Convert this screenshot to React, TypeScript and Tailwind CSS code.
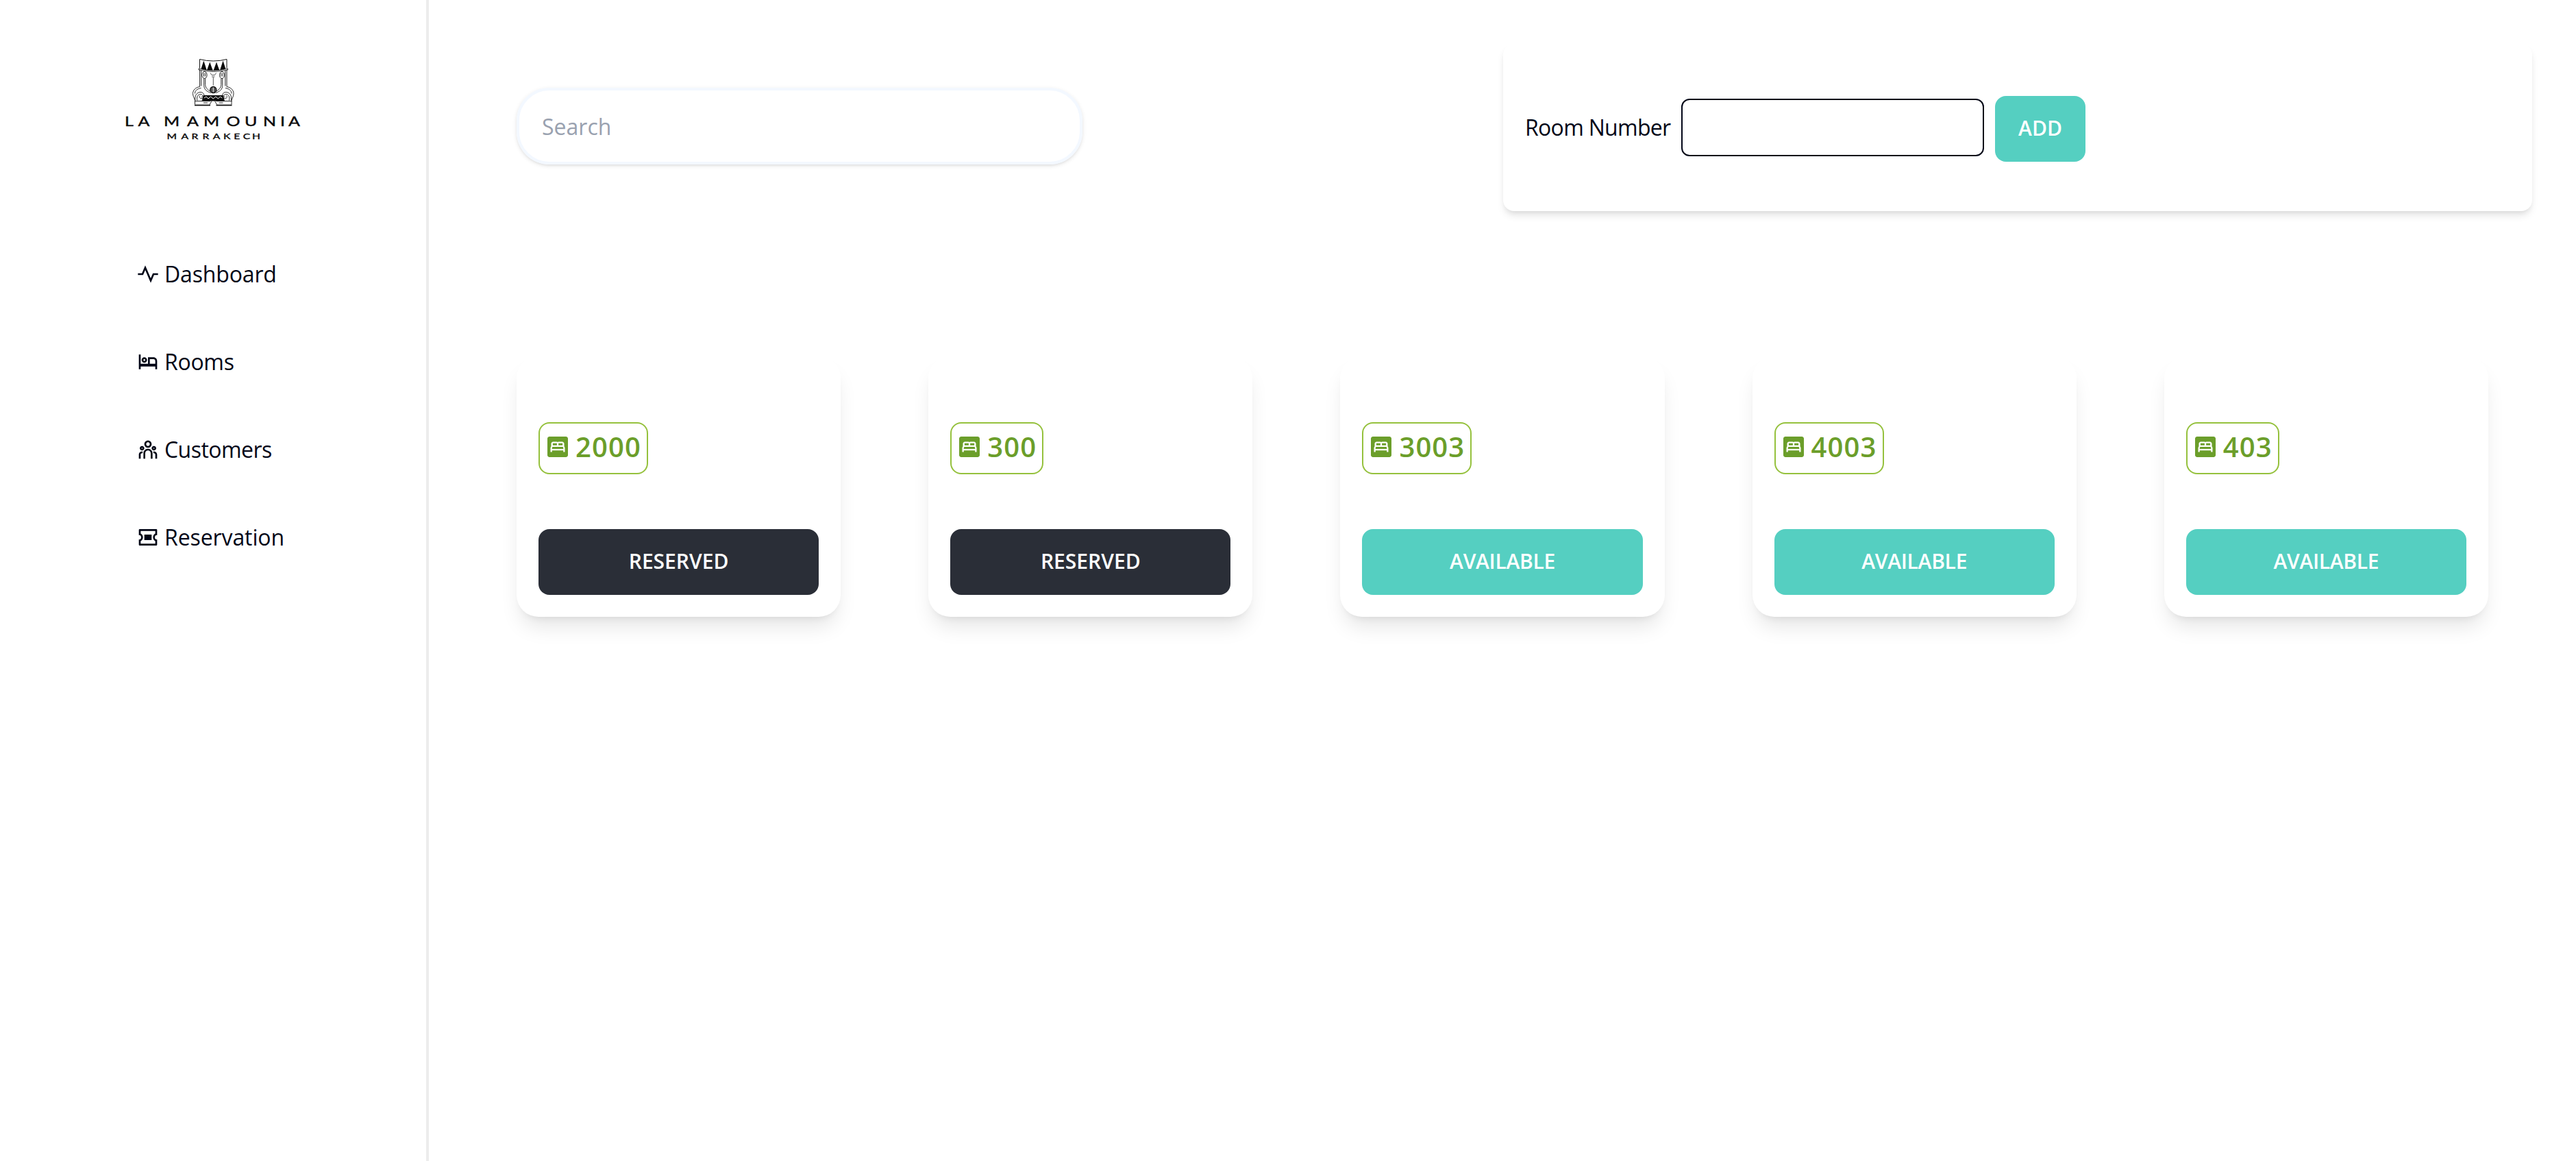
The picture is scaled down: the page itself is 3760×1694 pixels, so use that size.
import { RiPulseLine, RiHotelBedLine, RiTeamLine } from "react-icons/ri";
import { MdBedroomParent } from "react-icons/md";

function CouponIcon({ className }: { className?: string }) {
  return (
    <svg viewBox="0 0 24 24" fill="currentColor" className={className}>
      <path
        fillRule="evenodd"
        d="M2 9.5V4a1 1 0 0 1 1-1h18a1 1 0 0 1 1 1v5.5a2.5 2.5 0 1 0 0 5V20a1 1 0 0 1-1 1H3a1 1 0 0 1-1-1v-5.5a2.5 2.5 0 1 0 0-5zm2-1.532a4.5 4.5 0 0 1 0 8.064V19h16v-2.968a4.5 4.5 0 0 1 0-8.064V5H4v2.968zM8 9h8v6H8z"
      />
    </svg>
  );
}

function HalfGate() {
  return (
    <g fill="none" stroke="#111" strokeWidth="0.9">
      <path d="M10.5 16v25M12.700 17v23" />
      <path d="M10.5 41c-6 1-10 5-10 10 0 4 2 6 3 10v6" />
      <path d="M12.5 43c-6 1-9 4-9 8" />
      <ellipse cx="17.5" cy="24" rx="3.600" ry="5" />
      <path d="M16.500 21v5M18.800 21v5M16.700 29v10c0 6 4 9 10 11M18.700 29v9c0 5 4 8 8 10" />
      <path d="M4 61c-1-7 2-12 8-12 5 0 7 7 2 9-3 1-5-2-3-4M7 61c-1-4 0-9 5-9 3 0 4 4 1 4" />
      <path d="M3 62h11l2-8M25 67l3-5" />
      <path d="M3 68h23" strokeWidth="1.800" />
      <path d="M14 62h12M16 64.500h6" />
    </g>
  );
}

function Logo() {
  return (
    <svg viewBox="0 0 300 160" className="h-40 w-[300px]" fill="#0a0a0a">
      <g transform="translate(121 25.500)">
        <path d="M10.500 1q20 5 39.500 0v13M10.500 1v13" fill="none" stroke="#111" strokeWidth="1" />
        <path d="M16.300 3q2 6 4.300 13.500h-8.600q2.300-7 4.300-13.500zM25.300 5q2 6 4.500 12.500h-9q2.500-7 4.500-12.500zM35 5q2 6 4.500 12.500h-9q2.500-7 4.500-12.500zM44.500 3q2 6 4.300 13.500h-8.600q2.300-7 4.300-13.500z" />
        <path d="M9 14.500q21 6 42.500 0v2q-21 5-42.500 0z" fill="#fff" stroke="#111" strokeWidth=".8" />
        <HalfGate />
        <g transform="translate(60.500 0) scale(-1 1)">
          <HalfGate />
        </g>
        <path d="M30.300 27v12M26 21l2 3h4.500l2-3M28 26.500h4.500" fill="none" stroke="#444" strokeWidth=".9" />
        <circle cx="30.300" cy="45.500" r="4.500" fill="#555" stroke="#0a0a0a" strokeWidth="1.300" />
        <path d="M30.300 42v7" stroke="#eee" strokeWidth="1" />
        <path d="M16 53.500h28.500l2 8.500h-32z" />
        <path d="M17 57.500l3-2 3 3 3.500-3 3.700 3 3.700-3 3.500 3 3-3 3 2" fill="none" stroke="#fff" strokeWidth="1" />
        <path d="M27 68l3.300-5.500 3.300 5.500z" fill="#fff" />
      </g>
      <g fontFamily="Lato, sans-serif" fontWeight="400" stroke="#0a0a0a" strokeWidth="0.400">
        <text
          transform="translate(0 124) scale(1.350 1)"
          fontSize="18.500"
          x="16.3 30.7 41 58.5 83.7 101.5 126.3 146 166 184.5 193.3"
        >
          LA MAMOUNIA
        </text>
        <text
          transform="translate(0 142.800) scale(1.300 1)"
          fontSize="12"
          x="64.3 80.4 92 104.2 116 127.7 139.5 149.8 160"
        >
          MARRAKECH
        </text>
      </g>
    </svg>
  );
}

const nav = [
  { label: "Dashboard", Icon: RiPulseLine, tracking: "tracking-[-0.15px]" },
  { label: "Rooms", Icon: RiHotelBedLine, tracking: "tracking-[-0.3px]" },
  { label: "Customers", Icon: RiTeamLine, tracking: "tracking-[-0.55px]" },
  { label: "Reservation", Icon: CouponIcon, tracking: "tracking-[-0.1px]" },
];

const rooms = [
  { number: "2000", reserved: true },
  { number: "300", reserved: true },
  { number: "3003", reserved: false },
  { number: "4003", reserved: false },
  { number: "403", reserved: false },
];

export default function App() {
  return (
    <div className="flex h-[1694px] w-full overflow-hidden bg-white font-['Open_Sans',sans-serif] text-[#020617]">
      <aside className="flex w-[626px] shrink-0 flex-col border-r-4 border-[#ececec]">
        <div className="ml-[160px] mt-[60px]">
          <Logo />
        </div>
        <nav className="ml-[200px] mt-[148px] flex flex-col gap-16">
          {nav.map(({ label, Icon, tracking }) => (
            <a key={label} className="flex h-16 items-center gap-2 text-[32px]">
              <Icon className="size-8" />
              <span className={tracking}>{label}</span>
            </a>
          ))}
        </nav>
      </aside>
      <main className="flex flex-1 flex-col">
        <div className="flex items-start justify-between pl-32 pr-16 pt-16">
          <input
            placeholder="Search"
            className="mt-16 h-28 w-[826px] rounded-[48px] border-4 border-[#f3f8ff] px-[33px] text-[32px] shadow-[0_2px_6px_rgba(0,0,0,0.1),0_2px_4px_-2px_rgba(0,0,0,0.1)] placeholder:text-gray-400"
          />
          <form className="flex h-[244px] w-[1502px] items-start gap-4 rounded-2xl px-8 pt-19 shadow-[0_8px_12px_-2px_rgba(0,0,0,0.1),0_4px_8px_-4px_rgba(0,0,0,0.1)]">
            <label className="mt-1 flex h-[84px] items-center gap-4 text-[32px]">
              <span className="w-[212px] whitespace-nowrap tracking-[-0.7px]">Room Number</span>
              <input className="h-[84px] w-[442px] rounded-xl border-2 border-[#020617] px-4" />
            </label>
            <button type="button" className="h-24 w-[132px] rounded-2xl bg-[#55cfc1] pb-[3px] text-[30px] font-semibold text-white">
              ADD
            </button>
          </form>
        </div>
        <div className="ml-32 mr-32 mt-[212px] grid grid-cols-5 gap-32">
          {rooms.map((room) => (
            <article
              key={room.number}
              className="flex h-[380px] flex-col items-start justify-between rounded-[32px] p-8 pt-24 shadow-[0_20px_30px_-6px_rgba(0,0,0,0.1),0_8px_12px_-8px_rgba(0,0,0,0.1)]"
            >
              <div className="flex h-[76px] items-center gap-2 rounded-2xl border-2 border-[#95c13d] px-2 pb-1 text-[40px] font-semibold text-[#6b9e2a]">
                <MdBedroomParent className="size-9" />
                <span className="tracking-[1.12px]">{room.number}</span>
              </div>
              <button
                type="button"
                className={
                  room.reserved
                    ? "h-24 w-full rounded-2xl bg-[#2a2e37] pb-[3px] text-[30px] font-semibold text-white"
                    : "h-24 w-full rounded-2xl bg-[#55cfc1] pb-[3px] text-[30px] font-semibold tracking-[-0.3px] text-white"
                }
              >
                {room.reserved ? "RESERVED" : "AVAILABLE"}
              </button>
            </article>
          ))}
        </div>
      </main>
    </div>
  );
}
